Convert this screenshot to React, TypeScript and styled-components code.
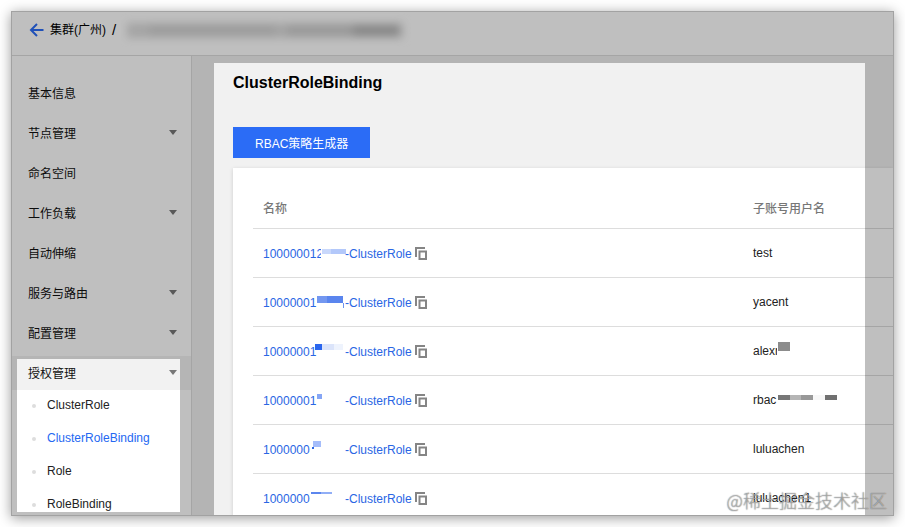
import React from "react";
import styled, { createGlobalStyle } from "styled-components";

const GlobalStyle = createGlobalStyle`
  * { box-sizing: border-box; }
  body {
    margin: 0;
    background: #fff;
    color: #222;
    font: 12px/18px "Liberation Sans", "Noto Sans CJK SC", sans-serif;
  }
`;

const Page = styled.div`
  height: 100vh;
  padding: 11px;
  overflow: hidden;
`;

const Window = styled.div`
  position: relative;
  display: flex;
  flex-direction: column;
  height: 100%;
  overflow: hidden;
  background: #fff;
  border: 1px solid #a2a2a2;
  box-shadow: 0 2px 12px rgba(0, 0, 0, 0.4);
`;

const Header = styled.header`
  flex: none;
  display: flex;
  align-items: center;
  gap: 5px;
  height: 44px;
  padding: 0 17px 8px;
  border-bottom: 1px solid #ddd;
`;

const BackButton = styled.button`
  display: flex;
  padding: 0;
  border: 0;
  background: none;
`;

const Crumb = styled.span`
  padding-left: 1px;
  color: #000;
`;

const Slash = styled(Crumb)`
  font-size: 15px;
`;

const Body = styled.div`
  flex: 1;
  display: flex;
  min-height: 0;
`;

const Sidebar = styled.nav`
  flex: none;
  width: 180px;
  padding-top: 20px;
  overflow: hidden;
  border-right: 1px solid #ddd;
`;

const Menu = styled.ul`
  display: flex;
  flex-direction: column;
  gap: 6px;
  margin: 0;
  padding: 0;
  list-style: none;
`;

const MenuItem = styled.button<{ $open?: boolean }>`
  display: flex;
  align-items: center;
  justify-content: space-between;
  width: 100%;
  height: 34px;
  padding: 2px 14px 0 16px;
  border: 0;
  background: ${(p) => (p.$open ? "#f2f2f2" : "none")};
  color: #111;
  font: inherit;
  text-align: left;
`;

const Caret = styled.svg`
  margin-bottom: 4px;
`;

const SubMenu = styled.ul`
  margin: 0;
  padding: 0;
  list-style: none;
`;

const SubItem = styled.li`
  display: flex;
  align-items: center;
  gap: 11px;
  height: 33px;
  padding: 0 0 3px 20px;

  &::before {
    content: "";
    width: 4px;
    height: 4px;
    margin-top: 2px;
    border-radius: 2px;
    background: #ddd;
  }
`;

const SubLink = styled.a<{ $current?: boolean }>`
  color: ${(p) => (p.$current ? "#2468f2" : "#222")};
  text-decoration: none;
`;

const Main = styled.main`
  flex: 1;
  min-width: 0;
  padding: 17px 0 0 41px;
  overflow: hidden;
  background: #f1f1f1;
`;

const Title = styled.h1`
  margin: 0 0 34px;
  color: #000;
  font-size: 16px;
  line-height: 20px;
`;

const PrimaryButton = styled.button`
  display: block;
  height: 31px;
  margin-bottom: 10px;
  padding: 2px 22px 0;
  border: 0;
  background: #2b6cf6;
  color: #fff;
  font: inherit;
`;

const Card = styled.section`
  padding: 20px 0 0 20px;
  background: #fff;
  box-shadow: 0 1px 4px rgba(0, 0, 0, 0.15);
`;

const Table = styled.table`
  width: 100%;
  table-layout: fixed;
  border-collapse: collapse;
`;

const HeadCell = styled.th<{ $width?: number }>`
  width: ${(p) => (p.$width ? `${p.$width}px` : "auto")};
  height: 40px;
  padding: 3px 10px 0;
  border-bottom: 1px solid #ddd;
  color: #777;
  font-weight: 500;
  text-align: left;
`;

const Cell = styled.td`
  height: 49px;
  padding: 0 10px;
  border-bottom: 1px solid #ddd;
  white-space: nowrap;
`;

const NameGroup = styled.div`
  display: flex;
  align-items: center;
  gap: 3px;
  padding-top: 2px;
`;

const NameLink = styled.a`
  display: flex;
  color: #2a66e4;
  text-decoration: none;
`;

const Redacted = styled.span<{ $wide?: boolean }>`
  position: relative;
  display: block;
  width: ${(p) => (p.$wide ? "82px" : "auto")};
`;

const Mosaic = styled.svg`
  position: absolute;
  left: 0;
  top: 0;
`;

const CopyButton = styled.button`
  display: flex;
  padding: 0;
  border: 0;
  background: none;
`;

const Dimmer = styled.div`
  position: absolute;
  inset: 0;
  pointer-events: none;
  background: rgba(0, 0, 0, 0.25);
  clip-path: polygon(
    evenodd,
    0 0, 100% 0, 100% 100%, 0 100%, 0 0,
    5px 347px, 168px 347px, 168px calc(100% - 3px), 5px calc(100% - 3px), 5px 347px,
    0 0,
    202px 51px, calc(100% - 28px) 51px, calc(100% - 28px) 100%, 202px 100%, 202px 51px,
    0 0
  );
`;

const Watermark = styled.div`
  position: absolute;
  right: 6px;
  bottom: 3px;
  color: rgba(255, 255, 255, 0.5);
  font-family: "Noto Sans CJK SC", sans-serif;
  font-weight: 300;
  font-size: 18px;
  line-height: 24px;
  text-shadow: 0 0 1px #333;
`;

type Block = [x: number, y: number, w: number, h: number, fill: string];

const menu = [
  { label: "基本信息" },
  { label: "节点管理", group: true },
  { label: "命名空间" },
  { label: "工作负载", group: true },
  { label: "自动伸缩" },
  { label: "服务与路由", group: true },
  { label: "配置管理", group: true },
  { label: "授权管理", group: true, open: true },
];

const subMenu = ["ClusterRole", "ClusterRoleBinding", "Role", "RoleBinding"];

const rows: { id: string; idBlocks: Block[]; user: string; userBlocks?: Block[] }[] = [
  {
    id: "100000012",
    idBlocks: [[58, 2, 4, 15, "#fff"], [59, 4, 24, 5, "#c9d8fb"], [68, 4, 15, 5, "#b3c8fa"]],
    user: "test",
  },
  {
    id: "10000001",
    idBlocks: [[54, 2, 26, 7, "#5a85ee"], [54, 2, 10, 7, "#7397f0"], [80, 9, 1, 5, "#6c93ef"]],
    user: "yacent",
  },
  {
    id: "10000001",
    idBlocks: [[52, 1, 7, 6, "#2b66ee"], [59, 1, 12, 6, "#dbe4fa"], [71, 1, 9, 6, "#eef3fd"]],
    user: "alexr",
    userBlocks: [[24, 0, 3, 18, "#fff"], [25, 0, 12, 9, "#8c8c8c"]],
  },
  { id: "10000001", idBlocks: [[54, 2, 5, 5, "#86a6f5"]], user: "rbac", userBlocks: [
    [25, 4, 12, 5, "#777"], [37, 4, 11, 5, "#b5b5b5"], [48, 4, 12, 5, "#989898"],
    [60, 4, 12, 5, "#f7f7f7"], [72, 4, 12, 5, "#707070"],
  ] },
  { id: "1000000", idBlocks: [[50, 0, 8, 6, "#a5bdfa"], [49, 6, 2, 2, "#2a66e4"]], user: "luluachen" },
  { id: "1000000", idBlocks: [[48, 2, 10, 2, "#5c86ee"], [58, 2, 11, 2, "#91aef6"]], user: "luluachen1" },
];

const Blocks = ({ blocks }: { blocks: Block[] }) => (
  <Mosaic width="90" height="18" aria-hidden="true">
    {blocks.map(([x, y, w, h, fill], i) => (
      <rect key={i} x={x} y={y} width={w} height={h} fill={fill} />
    ))}
  </Mosaic>
);

export default function App() {
  return (
    <Page>
      <GlobalStyle />
      <Window>
        <Header>
          <BackButton aria-label="返回">
            <svg width="15" height="14" viewBox="0 0 15 14" fill="none" stroke="#2b6cf6" strokeWidth="2">
              <path d="M14.500 7H2M8 1L2 7l6 6" />
            </svg>
          </BackButton>
          <Crumb>集群(广州)</Crumb>
          <Slash>/</Slash>
          <svg width="290" height="34" aria-hidden="true">
            <defs>
              <filter id="soft" x="-10%" y="-80%" width="120%" height="260%">
                <feGaussianBlur stdDeviation="4" />
              </filter>
            </defs>
            <g filter="url(#soft)">
              <rect x="6" y="10" width="276" height="15" fill="#dcdcdc" />
              <rect x="28" y="12" width="126" height="10" fill="#d0d0d0" />
              <rect x="166" y="12" width="66" height="11" fill="#cccccc" />
              <rect x="232" y="12" width="46" height="11" fill="#b4b4b4" />
            </g>
          </svg>
        </Header>
        <Body>
          <Sidebar>
            <Menu>
              {menu.map((item) => (
                <li key={item.label}>
                  <MenuItem $open={item.open}>
                    {item.label}
                    {item.group && (
                      <Caret width="8" height="5" viewBox="0 0 8 5" aria-hidden="true">
                        <path d="M0 0h8L4 5z" fill="#777" />
                      </Caret>
                    )}
                  </MenuItem>
                </li>
              ))}
            </Menu>
            <SubMenu>
              {subMenu.map((label) => (
                <SubItem key={label}>
                  <SubLink href="#" $current={label === "ClusterRoleBinding"}>{label}</SubLink>
                </SubItem>
              ))}
            </SubMenu>
          </Sidebar>
          <Main>
            <Title>ClusterRoleBinding</Title>
            <PrimaryButton>RBAC策略生成器</PrimaryButton>
            <Card>
              <Table>
                <thead>
                  <tr>
                    <HeadCell>名称</HeadCell>
                    <HeadCell $width={150}>子账号用户名</HeadCell>
                  </tr>
                </thead>
                <tbody>
                  {rows.map((row) => (
                    <tr key={row.user}>
                      <Cell>
                        <NameGroup>
                          <NameLink href="#">
                            <Redacted $wide>
                              {row.id}
                              <Blocks blocks={row.idBlocks} />
                            </Redacted>
                            -ClusterRole
                          </NameLink>
                          <CopyButton aria-label="复制">
                            <svg width="12" height="13" viewBox="0 0 12 13" fill="none" stroke="#858585" strokeWidth="2">
                              <path d="M1 10V1h9" />
                              <rect x="4.500" y="4.500" width="6.500" height="7.500" />
                            </svg>
                          </CopyButton>
                        </NameGroup>
                      </Cell>
                      <Cell>
                        <Redacted>
                          {row.user}
                          {row.userBlocks && <Blocks blocks={row.userBlocks} />}
                        </Redacted>
                      </Cell>
                    </tr>
                  ))}
                </tbody>
              </Table>
            </Card>
          </Main>
        </Body>
        <Dimmer />
        <Watermark>@稀土掘金技术社区</Watermark>
      </Window>
    </Page>
  );
}
